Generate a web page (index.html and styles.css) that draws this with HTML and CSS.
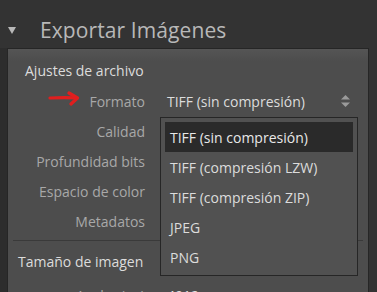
FILE: index.html
```html
<!doctype html>
<html>
    <head>
        <meta charset="utf-8">
        <title>Exportar Imágenes</title>
        <link rel="stylesheet" href="styles.css">
    </head>

    <body>
        <div class="header">
            <span class="twisty"></span>
            <span class="title">Exportar Imágenes</span>
        </div>

        <div class="panel">
            <div class="section-title">Ajustes de archivo</div>

            <div class="rows">
                <div class="label">
                    <svg class="red-arrow" width="32" height="16" viewBox="0 0 32 16">
                        <path d="M2 7 C10 6.5 18 6.5 28 6.8" stroke="#e01e1e" stroke-width="3.2" fill="none" stroke-linecap="round"/>
                        <path d="M21 2 L29.5 7 L23 13" stroke="#e01e1e" stroke-width="3.2" fill="none" stroke-linecap="round" stroke-linejoin="round"/>
                    </svg>
                    Formato
                </div>
                <div class="value select">
                    <span>TIFF (sin compresión)</span>
                    <svg class="updown" width="9" height="12" viewBox="0 0 9 12">
                        <path d="M4.5 0 L9 4.5 L0 4.5 Z" fill="#9a9a9a"/>
                        <path d="M0 7.5 L9 7.5 L4.5 12 Z" fill="#9a9a9a"/>
                    </svg>
                </div>

                <div class="label">Calidad</div>
                <div class="value"></div>

                <div class="label">Profundidad bits</div>
                <div class="value"></div>

                <div class="label">Espacio de color</div>
                <div class="value"></div>

                <div class="label">Metadatos</div>
                <div class="value"></div>
            </div>

            <div class="separator"></div>

            <div class="section-title size">Tamaño de imagen</div>

            <div class="rows last">
                <div class="label">Ancho (px)</div>
                <div class="value">4912</div>
            </div>

            <ul class="menu">
                <li class="selected">TIFF (sin compresión)</li>
                <li>TIFF (compresión LZW)</li>
                <li>TIFF (compresión ZIP)</li>
                <li>JPEG</li>
                <li>PNG</li>
            </ul>
        </div>
    </body>
</html>
```

FILE: styles.css
```css
body {
    margin: 0;
    height: 292px;
    overflow: hidden;
    background-color: #333333;
    font-family: 'Open Sans', 'Noto Sans', sans-serif;
    color: #dcdcdc;
}

.header {
    display: flex;
    align-items: center;
    box-sizing: border-box;
    height: 48px;
    padding: 12px 0 0 8px;
}

.twisty {
    width: 0;
    height: 0;
    border-left: 4px solid transparent;
    border-right: 4px solid transparent;
    border-top: 7px solid #b8b8b8;
    margin-top: 1px;
}

.title {
    margin-left: 24px;
    font-size: 21px;
    letter-spacing: 0.1px;
    color: #b8b8b8;
}

.panel {
    position: relative;
    margin-left: 7px;
    width: 360px;
    height: 260px;
    border: 1px solid #262626;
    border-bottom: none;
    background: linear-gradient(#555555, #4d4d4d 12px);
    box-shadow: -7px 0 0 #2d2d2d;
}

.section-title {
    padding: 12px 0 0 17px;
    height: 23px;
    font-size: 14px;
    line-height: 20px;
}

.rows {
    display: grid;
    grid-template-columns: 137px 1fr;
    column-gap: 22px;
    grid-auto-rows: 30px;
    margin-top: 2px;
}

.rows.last {
    margin-top: 10px;
}

.label {
    display: flex;
    align-items: center;
    justify-content: flex-end;
    font-size: 14px;
    color: #a8a8a8;
}

.red-arrow {
    margin-right: 9px;
    margin-top: -4px;
}

.value {
    display: flex;
    align-items: center;
    font-size: 14px;
    color: #dcdcdc;
}

.select {
    justify-content: space-between;
    padding-right: 18px;
}

.separator {
    margin: 4px 5px 0 5px;
    border-top: 1px solid #3a3a3a;
}

.section-title.size {
    padding: 11px 0 0 10px;
    height: 18px;
}

.menu {
    position: absolute;
    top: 68px;
    left: 152px;
    width: 188px;
    margin: 0;
    padding: 4px 4px 3px 4px;
    list-style: none;
    background-color: #515151;
    border: 1px solid #262626;
}

.menu li {
    height: 30px;
    padding-left: 5px;
    display: flex;
    align-items: center;
    font-size: 14px;
    color: #dcdcdc;
}

.menu li.selected {
    background-color: #2a2a2a;
    color: #e8e8e8;
}
```
